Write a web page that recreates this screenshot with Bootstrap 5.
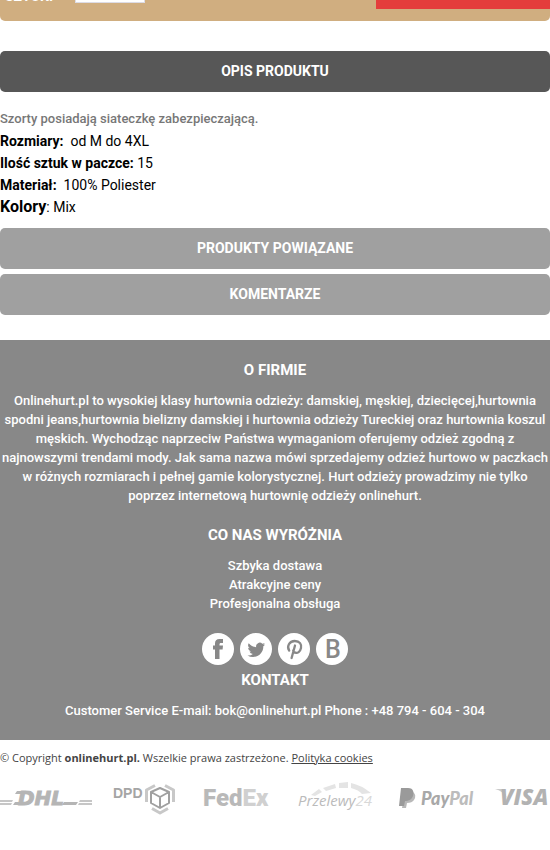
<!DOCTYPE html>
<html lang="pl">
<head>
<meta charset="utf-8">
<meta name="viewport" content="width=device-width, initial-scale=1">
<title>Onlinehurt.pl</title>
<link href="https://cdn.jsdelivr.net/npm/bootstrap@5.3.0/dist/css/bootstrap.min.css" rel="stylesheet">
<style>
body{font-family:Roboto,"Noto Sans",sans-serif;font-size:14px;line-height:22px;color:#000}
.order-bar{background:#d0ae80;border-radius:0 0 5px 5px;height:21px;margin-bottom:30px}
.order-bar label{color:#fff;font-weight:700;font-size:14px;line-height:14px;margin:0 22px 18px 5px}
.order-bar input{width:70px;height:34px;border:1px solid #dcdce6;margin-bottom:18px;background:#fff}
.order-bar button{width:174px;height:40px;background:#e43d3c;border:0;margin-bottom:12px}
.tab-btn{display:block;width:100%;padding:10px 0 11px;margin-bottom:5px;border:0;border-radius:5px;background:#a0a0a0;color:#fff;font-weight:700;font-size:14px;line-height:20px}
.tab-btn.current{background:#575757}
.details{padding:11px 0 10px}
.lede{color:#777;font-weight:500;font-size:13px}
.kolor{font-size:16px}
.about{background:#888;color:#fff;font-size:13px;line-height:19px;font-weight:500;padding:20px 0;margin-top:25px}
.about h2{font-size:15px;line-height:20px;font-weight:700;margin-bottom:11px}
.about p{margin-bottom:20px}
.about p.contact{margin-bottom:0}
.social{gap:6px;margin-bottom:5px}
.social a{line-height:0}
.copy{font-family:"Open Sans",sans-serif;font-size:11px;line-height:18px;color:#444;padding-top:9px}
.copy a{color:#444}
.logos{padding-top:15px}
</style>
</head>
<body>
<form class="order-bar d-flex align-items-end">
<label for="qty">SZTUKI</label><input id="qty" type="text"><button class="ms-auto" type="button" aria-label="Do koszyka"></button>
</form>
<main>
<button class="tab-btn current" type="button">OPIS PRODUKTU</button>
<div class="details">
<div class="lede">Szorty posiadają siateczkę zabezpieczającą.</div>
<div><b>Rozmiary:</b>&nbsp; od M do 4XL</div>
<div><b>Ilość sztuk w paczce:</b> 15</div>
<div><b>Materiał:</b>&nbsp; 100% Poliester</div>
<div><b class="kolor">Kolory</b>: Mix</div>
</div>
<button class="tab-btn" type="button">PRODUKTY POWIĄZANE</button>
<button class="tab-btn" type="button">KOMENTARZE</button>
</main>
<footer>
<div class="about text-center">
<h2>O FIRMIE</h2>
<p>Onlinehurt.pl to wysokiej klasy hurtownia odzieży: damskiej, męskiej, dziecięcej,hurtownia spodni jeans,hurtownia bielizny damskiej i hurtownia odzieży Tureckiej oraz hurtownia koszul męskich. Wychodząc naprzeciw Państwa wymaganiom oferujemy odzież zgodną z najnowszymi trendami mody. Jak sama nazwa mówi sprzedajemy odzież hurtowo w paczkach w różnych rozmiarach i pełnej gamie kolorystycznej. Hurt odzieży prowadzimy nie tylko poprzez internetową hurtownię odzieży onlinehurt.</p>
<h2>CO NAS WYRÓŻNIA</h2>
<p>Szbyka dostawa<br>Atrakcyjne ceny<br>Profesjonalna obsługa</p>
<div class="social d-flex justify-content-center">
<a href="#" aria-label="Facebook"><svg width="32" height="32" viewBox="0 0 32 32"><circle cx="16" cy="16" r="16" fill="#fff"/><path fill="#888" d="M13 26V16.500h-2V12.500h2v-2c0-3 1.400-4.500 4.500-4.500H21v4h-2c-1.200 0-1.500.5-1.500 1.500v1H21l-.4 4h-3.100V26z"/></svg></a>
<a href="#" aria-label="Twitter"><svg width="32" height="32" viewBox="0 0 32 32"><circle cx="16" cy="16" r="16" fill="#fff"/><path fill="#888" transform="translate(7.500 7.500) scale(1.100)" d="M5.026 15c6.038 0 9.341-5.003 9.341-9.334 0-.14 0-.282-.006-.422A6.685 6.685 0 0 0 16 3.542a6.658 6.658 0 0 1-1.889.518 3.301 3.301 0 0 0 1.447-1.817 6.533 6.533 0 0 1-2.087.793A3.286 3.286 0 0 0 7.875 6.030a9.325 9.325 0 0 1-6.767-3.429 3.289 3.289 0 0 0 1.018 4.382A3.323 3.323 0 0 1 .640 6.575v.045a3.288 3.288 0 0 0 2.632 3.218 3.203 3.203 0 0 1-.865.115 3.230 3.230 0 0 1-.614-.057 3.283 3.283 0 0 0 3.067 2.277A6.588 6.588 0 0 1 .780 13.580a6.320 6.320 0 0 1-.780-.045A9.344 9.344 0 0 0 5.026 15z"/></svg></a>
<a href="#" aria-label="Pinterest"><svg width="32" height="32" viewBox="0 0 32 32"><circle cx="16" cy="16" r="16" fill="#fff"/><path fill="none" stroke="#888" stroke-width="2.300" stroke-linecap="round" d="M11.200 17.600C8.500 13.500 11.200 8 16.800 8c5 0 7 3.300 6.200 7-.8 3.900-3.600 5.400-5.600 4.700-1.300-.4-2-1.300-2.200-2.300M17 12.500 13.600 25"/></svg></a>
<a href="#" aria-label="B"><svg width="32" height="32" viewBox="0 0 32 32"><circle cx="16" cy="16" r="16" fill="#fff"/><text x="17" y="25" text-anchor="middle" font-family="Roboto" font-weight="500" font-size="25" fill="#888">B</text></svg></a>
</div>
<h2>KONTAKT</h2>
<p class="contact">Customer Service E-mail: bok@onlinehurt.pl Phone : +48 794 - 604 - 304</p>
</div>
<div class="copy">© Copyright <b>onlinehurt.pl.</b> Wszelkie prawa zastrzeżone. <a href="#">Polityka cookies</a></div>
<div class="logos d-flex justify-content-between overflow-hidden">
<svg width="92" height="34" viewBox="0 0 92 34" role="img" aria-label="DHL"><path fill="#c6c6c6" d="M0 18h13l-1 2H0zM0 21h12l-1 2H0zM80 18h12v2H79zM79 21h13v2H78z"/><text x="18" y="23" font-family="DejaVu Sans" font-weight="700" font-style="italic" font-size="20" fill="#b5b5b5" stroke="#b5b5b5" stroke-width="1">DHL</text><path fill="#b5b5b5" d="m17 9h12l-2 3H15zM15 20h6v3h-8zM64 20h14l-2 3H62z"/></svg>
<svg width="70" height="34" viewBox="0 0 70 34" role="img" aria-label="DPD"><text x="0" y="16" font-family="Liberation Sans" font-weight="700" font-size="14" fill="#a5a5a5">DPD</text><g fill="none" stroke="#a0a0a0" stroke-width="2" stroke-linejoin="round"><path d="m47 6 9 4v11l-9 5-9-5V10zM38 10l9 5 9-5M47 15v11"/><path stroke="#c8c8c8" stroke-width="3" d="M42 3.500 33.500 8v12M52 3.500 60.500 8v12M39 26.500l8 4.500 8-4.500"/></g></svg>
<svg width="73" height="34" viewBox="0 0 73 34" role="img" aria-label="FedEx"><text x="0" y="24" font-family="Roboto" font-weight="900" font-size="24" fill="#b9b9b9">Fed<tspan fill="#d0d0d0">Ex</tspan></text></svg>
<svg width="82" height="34" viewBox="0 0 82 34" role="img" aria-label="Przelewy24"><path fill="#e4e4e4" d="m14 13 8-6 3 3-7 4zM26 6l12-4 1 4-10 3zM42 1l9-1v6h-9zM54 1q10 2 20 10l-9 1Q62 8 54 6z"/><text x="1" y="24" font-family="Open Sans" font-style="italic" font-size="15" fill="#bbb">Przelewy<tspan fill="#d8d8d8">24</tspan></text></svg>
<svg width="75" height="34" viewBox="0 0 75 34" role="img" aria-label="PayPal"><path fill="#b8b8b8" d="M6 10h8q4 3 1 8-2 3-7 3l-1 5H3z"/><path fill="#9a9a9a" d="M2 6h7c6 0 6 5 5 8-1 3-4 5-8 5l-1 5H0z"/><text x="22" y="23" font-family="Lato" font-weight="900" font-style="italic" font-size="18" fill="#a8a8a8">Pay<tspan fill="#bcbcbc">Pal</tspan></text></svg>
<svg width="55" height="34" viewBox="0 0 55 34" role="img" aria-label="VISA"><path fill="#cacaca" d="M0 7h8l4 9Q8 9 0 7z"/><text x="5" y="23" font-family="Open Sans" font-weight="800" font-style="italic" font-size="22" fill="#b2b2b2">VISA</text></svg>
</div>
</footer>
<script src="https://cdn.jsdelivr.net/npm/bootstrap@5.3.0/dist/js/bootstrap.bundle.min.js"></script>
</body>
</html>
